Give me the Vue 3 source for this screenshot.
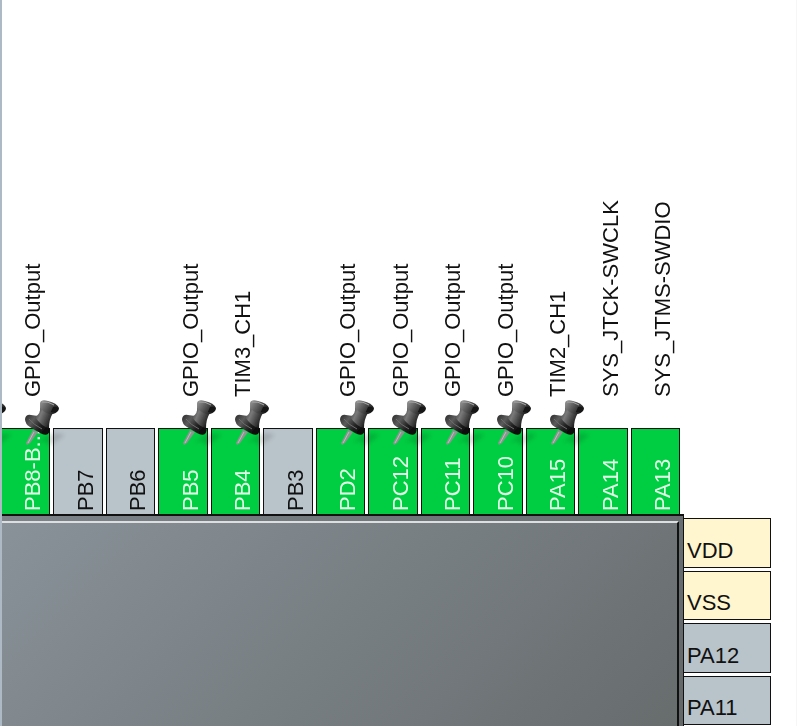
<script setup>
const topPins = [
  { name: '', state: 'on', signal: '', pinned: true },
  { name: 'PB8-B...', state: 'on', signal: 'GPIO_Output', pinned: true },
  { name: 'PB7', state: 'free' },
  { name: 'PB6', state: 'free' },
  { name: 'PB5', state: 'on', signal: 'GPIO_Output', pinned: true },
  { name: 'PB4', state: 'on', signal: 'TIM3_CH1', pinned: true },
  { name: 'PB3', state: 'free' },
  { name: 'PD2', state: 'on', signal: 'GPIO_Output', pinned: true },
  { name: 'PC12', state: 'on', signal: 'GPIO_Output', pinned: true },
  { name: 'PC11', state: 'on', signal: 'GPIO_Output', pinned: true },
  { name: 'PC10', state: 'on', signal: 'GPIO_Output', pinned: true },
  { name: 'PA15', state: 'on', signal: 'TIM2_CH1', pinned: true },
  { name: 'PA14', state: 'on', signal: 'SYS_JTCK-SWCLK' },
  { name: 'PA13', state: 'on', signal: 'SYS_JTMS-SWDIO' },
]
const sidePins = [
  { name: 'VDD', state: 'power' },
  { name: 'VSS', state: 'power' },
  { name: 'PA12', state: 'free' },
  { name: 'PA11', state: 'free' },
]
</script>

<template>
  <main class="view">
    <svg class="defs" aria-hidden="true">
      <defs>
        <linearGradient id="cap" x1="0" y1="0" x2="1" y2="0.5">
          <stop offset="0" stop-color="#9a9a9a" />
          <stop offset="0.5" stop-color="#5c5c5c" />
          <stop offset="1" stop-color="#1a1a1a" />
        </linearGradient>
        <linearGradient id="neck" x1="0" y1="0" x2="1" y2="0.5">
          <stop offset="0" stop-color="#2a2a2a" />
          <stop offset="0.4" stop-color="#7a7a7a" />
          <stop offset="1" stop-color="#1c1c1c" />
        </linearGradient>
        <linearGradient id="collar" x1="0" y1="0" x2="1" y2="0.6">
          <stop offset="0" stop-color="#2a2a2a" />
          <stop offset="0.35" stop-color="#5c5c5c" />
          <stop offset="0.7" stop-color="#222" />
          <stop offset="1" stop-color="#080808" />
        </linearGradient>
        <filter id="soft" x="-30%" y="-30%" width="160%" height="160%">
          <feGaussianBlur stdDeviation="2" />
        </filter>
        <filter id="edge" x="-10%" y="-10%" width="120%" height="120%">
          <feGaussianBlur stdDeviation="0.5" />
        </filter>
        <g id="pushpin">
          <path d="M12 44 L22 36 L32 34 L40 36 L32 42 L25 47 L20 42Z" fill="#000" opacity="0.13" filter="url(#soft)" />
          <g filter="url(#edge)">
            <path d="M2 46 L1 44 L8 31 L13 33 L5 44Z" fill="#8f9493" />
            <path d="M3 44 L9 33" stroke="#b9bdbb" stroke-width="1" />
            <path d="M0 20 Q1 15 6 16 L13 17 L23 26 Q26 31 23 35 Q20 37 15 34 L5 28 Q0 25 0 20Z" fill="url(#collar)" />
            <path d="M10 18 Q16 15 15 8 L28 14 Q24 20 24 29 Q17 28 10 18Z" fill="url(#neck)" />
            <path d="M15 4 Q16 0 23 2 Q32 4 34 9 Q34 13 28 15 Q20 15 15 9Z" fill="url(#cap)" />
            <path d="M28 8 Q33 7 33 11 Q31 14 26 13Z" fill="#141414" />
            <path d="M17 3 Q23 2 29 6" fill="none" stroke="#a8a8a8" stroke-width="1" />
            <path d="M4 20 Q9 26 17 30" fill="none" stroke="#6e6e6e" stroke-width="1" />
          </g>
        </g>
      </defs>
    </svg>

    <section class="top" aria-label="Top pins">
      <div v-for="(pin, i) in topPins" :key="i" class="column">
        <span class="signal">{{ pin.signal }}</span>
        <div class="pin vertical" :class="pin.state">
          <span class="name">{{ pin.name }}</span>
          <svg v-if="pin.pinned" class="pushpin" viewBox="0 0 44 50" aria-hidden="true">
            <use href="#pushpin" />
          </svg>
        </div>
      </div>
    </section>

    <section class="body">
      <div class="chip"><div class="face"></div></div>
      <div class="side" aria-label="Right pins">
        <div v-for="pin in sidePins" :key="pin.name" class="pin horizontal" :class="pin.state">
          {{ pin.name }}
        </div>
      </div>
    </section>
  </main>
</template>

<style>
body {
  margin: 0;
  background: #fff;
}
</style>

<style scoped>
.view {
  box-sizing: border-box;
  display: flex;
  flex-direction: column;
  min-height: 100vh;
  overflow: hidden;
  border-left: 2px solid #adbac6;
  border-right: 1px solid #f6f6f6;
  background: #fff;
  color: #111;
  font: 22px/24px "Liberation Sans", Arial, sans-serif;
}

.defs {
  position: absolute;
  width: 0;
  height: 0;
}

.top {
  display: grid;
  grid-template-columns: repeat(14, minmax(0, 1fr));
  gap: 3px;
  margin: 0 116px 0 -54px;
  padding-top: 190px;
}

.column {
  display: grid;
  grid-template-rows: 207px 86px;
  row-gap: 31px;
}

.signal,
.name {
  writing-mode: vertical-rl;
  transform: rotate(180deg);
  white-space: nowrap;
}

.signal {
  justify-self: end;
  margin-right: 5px;
}

.pin {
  box-sizing: border-box;
  border: 1px solid #111;
}

.vertical {
  position: relative;
  display: flex;
  justify-content: flex-end;
  border-bottom: 0;
  padding: 0 4px 3px 0;
}

.horizontal {
  display: flex;
  align-items: flex-end;
  border-left: 0;
  padding: 0 0 4px 3px;
}

.on {
  background: #00ce42;
  color: #e4ffe9;
}

.free {
  background: #b9c4ca;
}

.power {
  background: #fff5ce;
}

.pushpin {
  position: absolute;
  z-index: 1;
  top: -30px;
  left: 23px;
  width: 44px;
  height: 50px;
}

.body {
  flex: 1;
  display: grid;
  grid-template-columns: minmax(0, 1fr) 87px;
  margin-right: 25px;
}

.chip {
  display: flex;
  border-top: 2px solid #111;
  border-right: 1px solid #111;
  padding: 5px 4px 0 0;
  background: linear-gradient(135deg, #7c848a, #626868);
}

.face {
  flex: 1;
  border-top: 2px solid #dcdedf;
  border-right: 2px solid #111;
  background: linear-gradient(135deg, #899299, #676c6d);
}

.side {
  display: grid;
  grid-auto-rows: minmax(48px, 1fr);
  gap: 3px;
  padding: 4px 0 1px;
}
</style>
